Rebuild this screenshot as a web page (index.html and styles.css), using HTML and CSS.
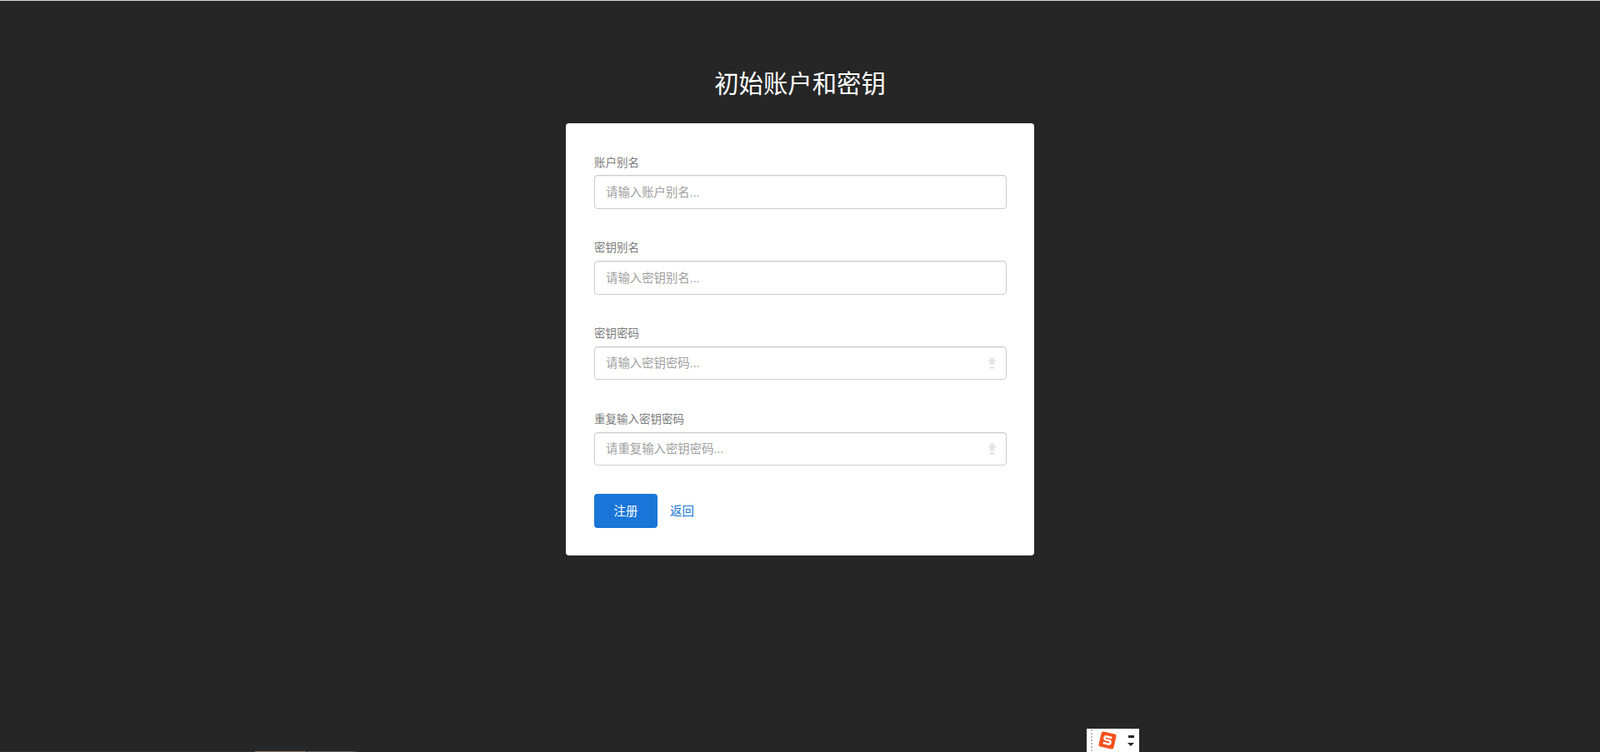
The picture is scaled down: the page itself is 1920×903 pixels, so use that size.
FILE: index.html
```html
<!DOCTYPE html>
<html>
<head>
  <meta charset="utf-8">
  <title>初始账户和密钥</title>
  <link rel="stylesheet" href="styles.css">
</head>
<body>
  <div class="page">
    <h1>初始账户和密钥</h1>

    <form class="card">
      <div class="form-group">
        <label for="accountAlias">账户别名</label>
        <input type="text" id="accountAlias" placeholder="请输入账户别名...">
      </div>

      <div class="form-group">
        <label for="keyAlias">密钥别名</label>
        <input type="text" id="keyAlias" placeholder="请输入密钥别名...">
      </div>

      <div class="form-group pass-group">
        <label for="keyPass">密钥密码</label>
        <div class="input-wrap">
          <input type="password" id="keyPass" placeholder="请输入密钥密码...">
          <svg class="caps-icon" viewBox="0 0 12 16"><path d="M6 0 L12 7 H9 V11 H3 V7 H0 Z M3 13 H9 V16 H3 Z"/></svg>
        </div>
      </div>

      <div class="form-group pass-group last">
        <label for="keyPass2">重复输入密钥密码</label>
        <div class="input-wrap">
          <input type="password" id="keyPass2" placeholder="请重复输入密钥密码...">
          <svg class="caps-icon" viewBox="0 0 12 16"><path d="M6 0 L12 7 H9 V11 H3 V7 H0 Z M3 13 H9 V16 H3 Z"/></svg>
        </div>
      </div>

      <div class="actions">
        <button type="button" class="button">注册</button>
        <a href="#" class="back-link">返回</a>
      </div>
    </form>
  </div>

  <!-- desktop stuff showing through at the bottom of the capture -->
  <div class="task-strip"><span class="strip-teal"></span><span class="strip-a"></span><span class="strip-b"></span><span class="strip-c"></span></div>
  <div class="ime-bar">
    <span class="ime-grip"></span>
    <svg class="ime-logo" viewBox="0 0 24 24">
      <g transform="rotate(13 12 12)">
        <rect x="2.8" y="2.8" width="18.4" height="18.4" rx="2.5" fill="#f4511e"/>
        <path d="M16.5 7.8 H10 C7.2 7.8 7.2 11.6 10 11.8 H14 C16.8 12 16.8 16.2 14 16.2 H7.5" fill="none" stroke="#fff" stroke-width="2.5"/>
      </g>
    </svg>
    <span class="ime-arrows">
      <span class="ime-dash"></span>
      <span class="ime-down"></span>
    </span>
  </div>
</body>
</html>
```

FILE: styles.css
```css
html, body {
  margin: 0;
  height: 100%;
  overflow: hidden;
}
body {
  background-color: #262626;
  border-top: 1px solid #d8d8d8;
  box-sizing: border-box;
  font-family: "Liberation Sans", "Noto Sans CJK SC", sans-serif;
}
.page {
  width: 562px;
  margin: 0 auto;
  padding-top: 82px;
}
h1 {
  margin: 0 0 29px;
  height: 36px;
  line-height: 36px;
  color: #fff;
  font-size: 29.4px;
  font-weight: 400;
  text-align: center;
}
.card {
  background-color: #fff;
  padding: 40px 33px 33px 34px;
  border-radius: 4px;
}
.form-group {
  margin-bottom: 40px;
}
.pass-group {
  margin-bottom: 41px;
}
.pass-group input {
  height: 40px;
}
.pass-group.last {
  margin-bottom: 34px;
}
label {
  display: block;
  height: 16px;
  line-height: 16px;
  margin-bottom: 6px;
  font-size: 13.5px;
  color: #7d7d7d;
}
.form-group + .form-group label {
  margin-top: -1px;
  margin-bottom: 7px;
}
input {
  display: block;
  width: 100%;
  height: 41px;
  padding: 0 13px;
  border: 1px solid #ccc;
  border-radius: 4px;
  box-shadow: inset 0 1px 1px rgba(0,0,0,0.075);
  box-sizing: border-box;
  font-size: 14.4px;
  font-family: "Liberation Sans", "Noto Sans CJK SC", sans-serif;
}
input::placeholder {
  color: #a0a0a0;
  opacity: 1;
}
.input-wrap {
  position: relative;
}
.caps-icon {
  position: absolute;
  right: 12px;
  top: 12px;
  width: 11px;
  height: 15px;
  fill: #e6e6e6;
}
.actions {
  display: flex;
  align-items: center;
  gap: 15px;
}
.button {
  width: 76px;
  height: 41px;
  padding: 0 0 2px;
  background-color: #1976d8;
  color: #fff;
  border: none;
  border-radius: 4px;
  font-size: 14.4px;
  font-family: "Liberation Sans", "Noto Sans CJK SC", sans-serif;
}
.back-link {
  padding-bottom: 2px;
  color: #1976d8;
  font-size: 14.4px;
  text-decoration: none;
}
.task-strip {
  position: fixed;
  left: 0;
  bottom: 0;
  display: flex;
  height: 1px;
}
.strip-teal {
  width: 306px;
  background-color: #2a3438;
}
.strip-a {
  width: 61px;
  margin-right: 1px;
  background-color: #8a7868;
}
.strip-b {
  width: 56px;
  background-color: #5c6464;
}
.strip-c {
  width: 5px;
  background-color: #3c4040;
}
.ime-bar {
  position: fixed;
  left: 1304px;
  bottom: 0;
  width: 63px;
  height: 28px;
  background-color: #fff;
  display: flex;
  align-items: center;
}
.ime-grip {
  width: 0;
  height: 26px;
  margin-left: 5px;
  border-left: 2px dotted #bbb;
}
.ime-logo {
  width: 24px;
  height: 24px;
  margin-left: 6px;
}
.ime-arrows {
  display: flex;
  flex-direction: column;
  align-items: center;
  gap: 6px;
  margin-left: 12px;
}
.ime-dash {
  width: 7px;
  height: 3px;
  background-color: #222;
}
.ime-down {
  width: 0;
  height: 0;
  border-left: 4px solid transparent;
  border-right: 4px solid transparent;
  border-top: 4px solid #222;
}
```
